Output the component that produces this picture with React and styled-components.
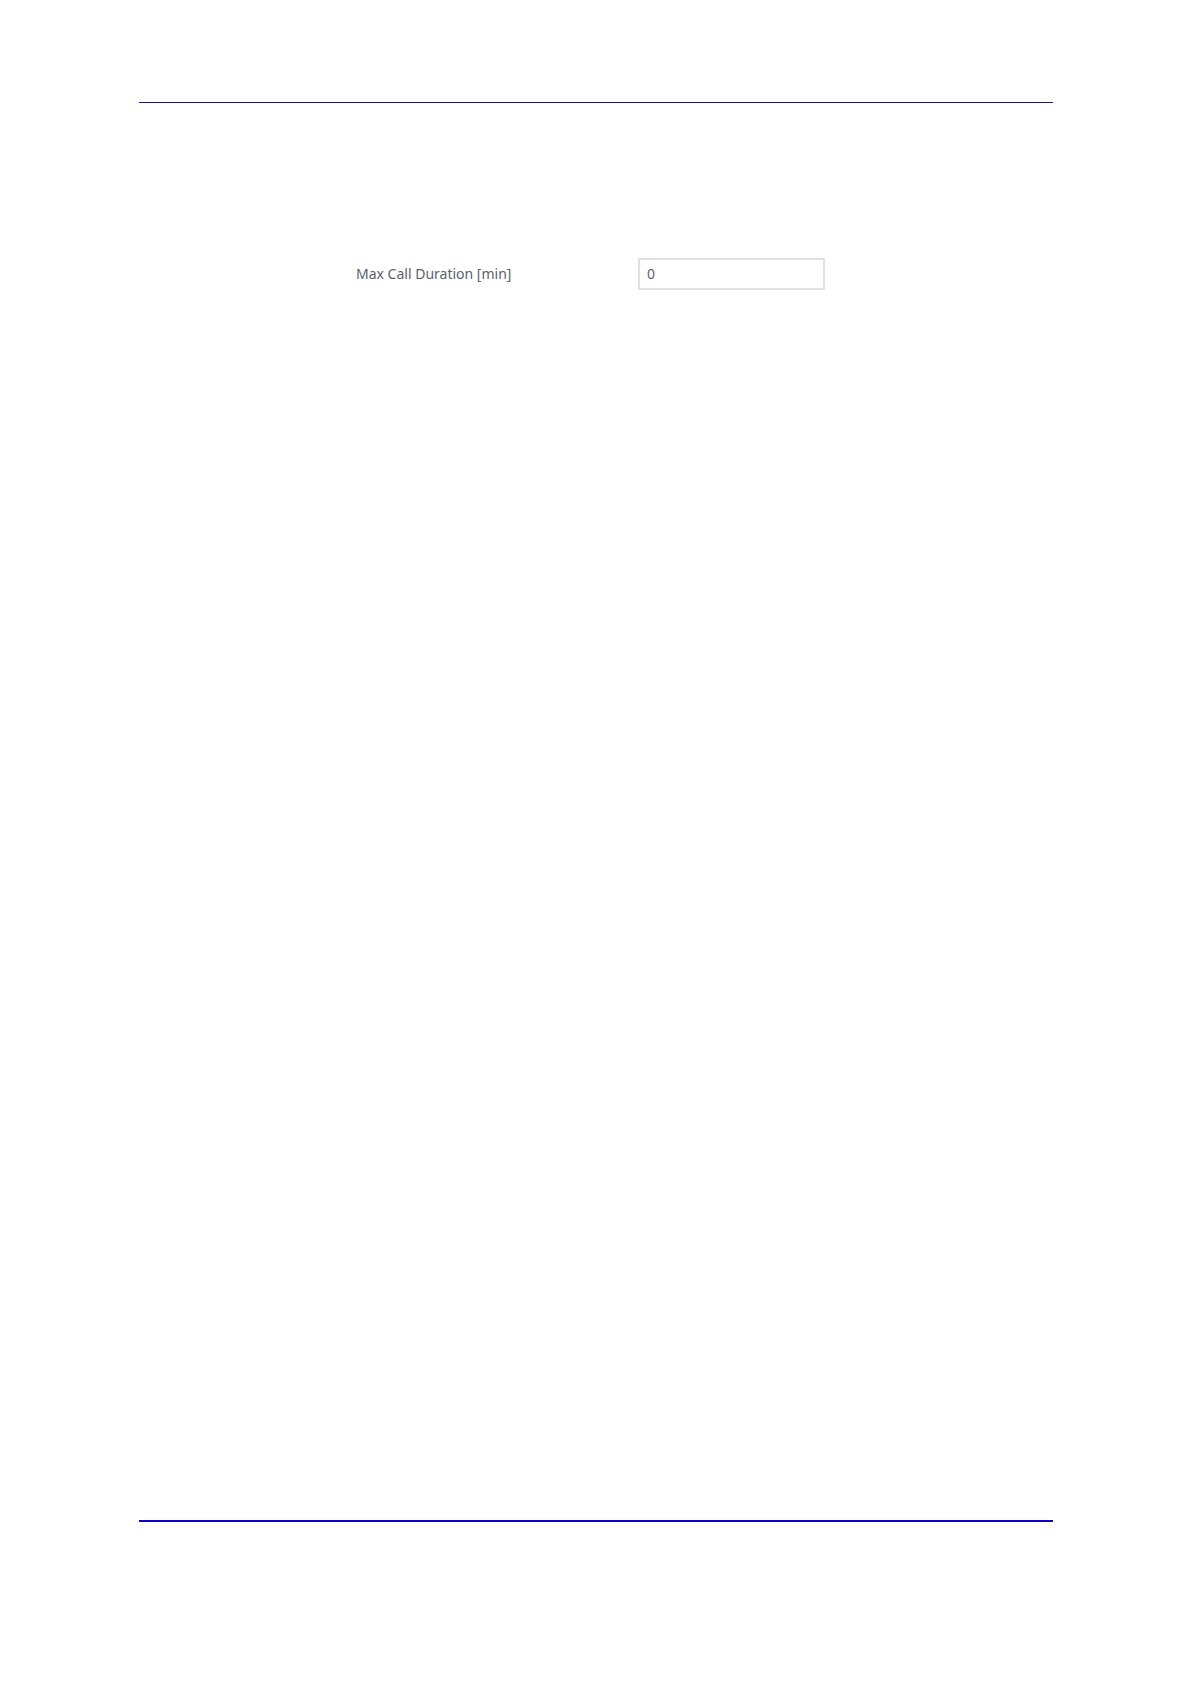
import React, { useState } from 'react';
import styled, { createGlobalStyle } from 'styled-components';

const GlobalStyle = createGlobalStyle`
    body {
        margin: 0;
        background-color: #ffffff;
        font-family: "Noto Sans", "Open Sans", sans-serif;
    }
`;

const Page = styled.div`
    box-sizing: border-box;
    min-height: 100vh;
    display: flex;
    flex-direction: column;
    padding: 102px 138px 161px 139px;
`;

const Rule = styled.hr`
    width: 100%;
    height: ${({ $thick }) => ($thick ? '2px' : '1px')};
    margin: 0;
    border: none;
    background-color: ${({ $thick }) => ($thick ? '#1100cc' : '#1a10a0')};
`;

const Content = styled.main`
    flex: 1;
    padding: 155px 23px 0 12px;
`;

const FieldRow = styled.div`
    display: flex;
    align-items: center;
    justify-content: center;
`;

const FieldLabel = styled.label`
    width: 282px;
    font-size: 14px;
    line-height: 20px;
    color: #5a5f6e;
`;

const FieldInput = styled.input`
    box-sizing: border-box;
    width: 187px;
    height: 32px;
    padding: 0 7px 2px;
    border: 2px solid #dfe1e1;
    border-radius: 0;
    background-color: #ffffff;
    font-family: inherit;
    font-size: 14px;
    line-height: 20px;
    color: #5a6270;
    outline: none;
`;

export default function App(){
    const [maxDuration, setMaxDuration] = useState('0');

    return <>
        <GlobalStyle />
        <Page>
            <Rule />
            <Content>
                <FieldRow>
                    <FieldLabel htmlFor="max-call-duration">Max Call Duration [min]</FieldLabel>
                    <FieldInput
                        id="max-call-duration"
                        type="text"
                        inputMode="numeric"
                        value={maxDuration}
                        onChange={(e) => setMaxDuration(e.target.value)}
                    />
                </FieldRow>
            </Content>
            <Rule $thick />
        </Page>
    </>
}
